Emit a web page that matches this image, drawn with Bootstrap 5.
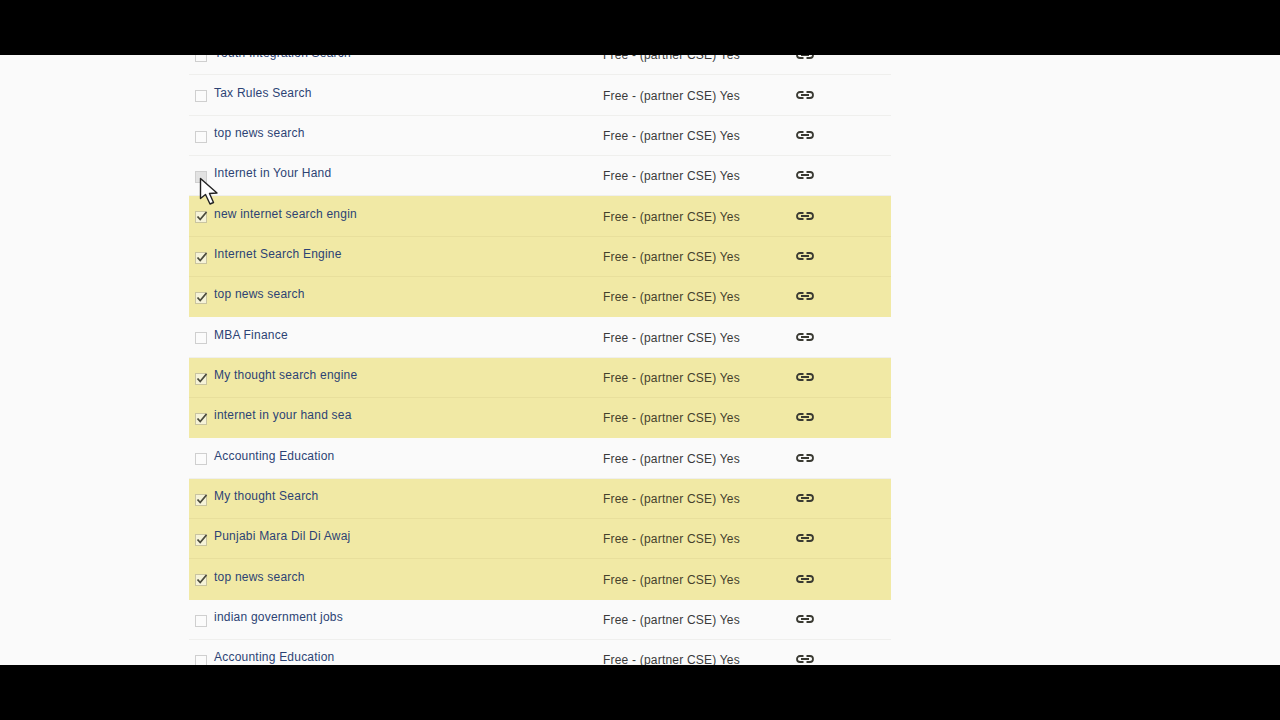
<!DOCTYPE html>
<html lang="en">
<head>
    <meta charset="UTF-8">
    <title>Custom Search Engines</title>
    <link href="https://cdn.jsdelivr.net/npm/bootstrap@5.3.0/dist/css/bootstrap.min.css" rel="stylesheet">
    <style>
        body { background: #000; font-family: "Liberation Sans", Arial, sans-serif; font-size: 12px; }
        .screen { height: 610px; margin-top: 55px; background: #fafafa; overflow: hidden; position: relative; }
        .engine-list { width: 702px; margin: -20px 0 0 189px; }
        .engine-row { height: 40.33px; border-bottom: 1px solid #efefed; padding-left: 6px; }
        .engine-row.picked { background: #f1e9a5; border-bottom-color: #e8df9c; }
        .engine-row.last-picked { border-bottom-color: transparent; }
        .tick { width: 12px; height: 12px; border: 1px solid #cfcfcf; background: #fbfbfb; flex: none; margin-top: 15px; position: relative; }
        .tick.hovered { background: #e2e2e2; }
        .picked .tick { border-color: #c9c4a0; background: #f6f3d8; }
        .tick svg { position: absolute; left: -1px; top: -2px; }
        .name { width: 389px; margin-left: 7px; padding-top: 10.5px; color: #2c4374; letter-spacing: .22px; line-height: 14px; }
        .plan { width: 193px; padding-top: 13.3px; color: #3a3a3a; letter-spacing: .2px; line-height: 14px; white-space: nowrap; }
        .picked .plan { color: #45412c; }
        .link-ico { margin-top: 15.5px; }
        .cursor { position: absolute; left: 199px; top: 122px; }
    </style>
</head>
<body>
    <div class="screen">
        <div class="engine-list" id="engineList"></div>
        <svg class="cursor" width="21" height="29" viewBox="0 0 21 29">
            <path d="M1.500 1.500 L1.500 21.500 L6.500 17.500 L11 27 L14.500 25.500 L10.500 16.500 L18 16 Z" fill="#fff" stroke="#222" stroke-width="1.4" stroke-linejoin="round"/>
        </svg>
    </div>

    <script src="https://cdn.jsdelivr.net/npm/bootstrap@5.3.0/dist/js/bootstrap.bundle.min.js"></script>
    <script>
        const engines = [
            ['Youth Integration Search', 0],
            ['Tax Rules Search', 0],
            ['top news search', 0],
            ['Internet in Your Hand', 0],
            ['new internet search engin', 1],
            ['Internet Search Engine', 1],
            ['top news search', 1],
            ['MBA Finance', 0],
            ['My thought search engine', 1],
            ['internet in your hand sea', 1],
            ['Accounting Education', 0],
            ['My thought Search', 1],
            ['Punjabi Mara Dil Di Awaj', 1],
            ['top news search', 1],
            ['indian government jobs', 0],
            ['Accounting Education', 0]
        ];
        const tick = '<svg width="13" height="13" viewBox="0 0 13 13"><path d="M2.500 6.500 L5.200 9.500 L11.500 2" fill="none" stroke="#4a4a3c" stroke-width="1.8"/></svg>';
        const chain = '<svg class="link-ico" width="18" height="8" viewBox="0 0 18 8"><path d="M7.500 1H4a3 3 0 0 0 0 6h3.500M10.500 1H14a3 3 0 0 1 0 6h-3.500M5 4h8" fill="none" stroke="#3a3a32" stroke-width="1.800"/></svg>';
        document.getElementById('engineList').innerHTML = engines.map(([name, picked], i) => {
            const next = engines[i + 1];
            const cls = picked ? (next && next[1] ? 'picked' : 'picked last-picked') : '';
            const hovered = name === 'Internet in Your Hand' ? 'hovered' : '';
            return `<div class="engine-row d-flex ${cls}">
                <span class="tick ${hovered}">${picked ? tick : ''}</span>
                <span class="name">${name}</span>
                <span class="plan">Free - (partner CSE) Yes</span>
                ${chain}
            </div>`;
        }).join('');
    </script>
</body>
</html>
